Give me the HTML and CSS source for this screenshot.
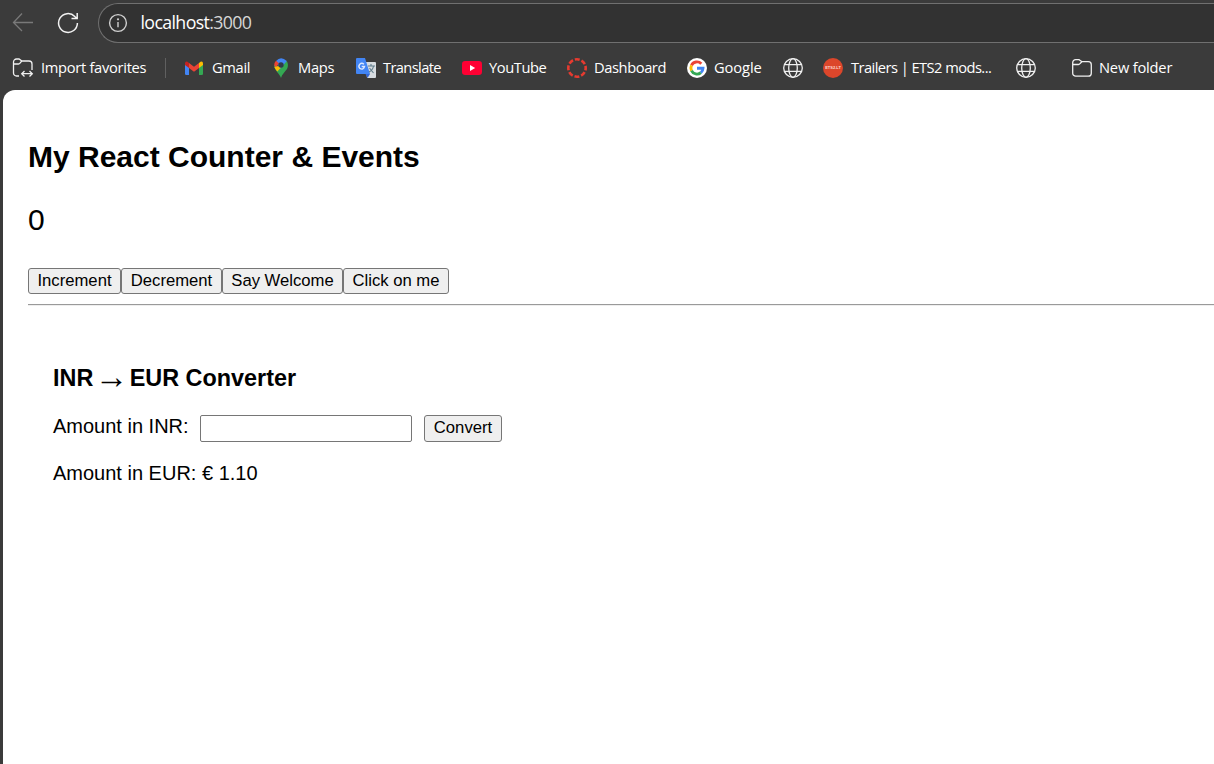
FILE: index.html
```html
<!DOCTYPE html>
<html lang="en">
<head>
<meta charset="utf-8">
<title>React App</title>
<link rel="stylesheet" href="styles.css">
</head>
<body>
<header class="toolbar">
  <svg class="back" width="22" height="20" viewBox="0 0 22 20"><path d="M21 9.5H2M10 .5L1.5 9.5L10 18"/></svg>
  <svg class="reload" width="22" height="22" viewBox="0 0 22 22"><path d="M20.4 11A9.4 9.4 0 1 1 17.8 4.5L20 6.5M20.2 1V6.5H14.5"/></svg>
  <div class="address">
    <svg class="info" width="20" height="20" viewBox="0 0 20 20"><circle cx="10" cy="10" r="8.4"/><path d="M10 9V14.2"/><circle class="dot" cx="10" cy="6.3" r="1.1"/></svg>
    <span class="url">localhost<span class="port">:3000</span></span>
  </div>
</header>
<nav class="bookmarks">
  <div class="item"><svg class="line" width="22" height="20" viewBox="0 0 22 20"><path d="M7 18H4.5A3 3 0 0 1 1.5 15V4A3 3 0 0 1 4.5 1H7L10 3H17A3 3 0 0 1 20 6V12M1.5 6H6.5C8 6 8 4.5 10 3M10 15.7H20M12.5 13L9.7 15.7L12.5 18.5M17.5 13L20.3 15.7L17.5 18.5"/></svg><span class="label import">Import favorites</span></div>
  <div class="separator"></div>
  <div class="item"><svg width="20" height="20" viewBox="0 0 20 20"><path fill="#4285f4" d="M1 5L5 8V17H2.3Q1 17 1 15.7Z"/><path fill="#34a853" d="M15 8L19 5V15.7Q19 17 17.7 17H15Z"/><path fill="#fbbc04" d="M15 5L16.5 3.7Q19 2.8 19 5.5V7L15 10Z"/><path fill="#c5221f" d="M5 10L1 7V5.5Q1 2.8 3.5 3.7L5 5Z"/><path fill="#ea4335" d="M5 5L10 8.8L15 5V10L10 13.8L5 10Z"/></svg><span class="label gmail">Gmail</span></div>
  <div class="item"><svg width="20" height="20" viewBox="0 0 20 20"><path fill="#34a853" d="M10 20C9 16 3 12 3 7L7 8L15.8 3Q18 7 16 11C14 14 11 16 10 20Z"/><path fill="#4285f4" d="M5 3Q10-2.5 15.8 3L9 11L5 3Z"/><path fill="#ea4335" d="M5 2.7L8 5.3L4.6 10Q1.7 6 5 2.7Z"/><path fill="#fbbc04" d="M3.4 9L7.8 8L10 9.5L6.3 13.6Q4 11 3.4 9Z"/><circle cx="10" cy="7" r="2.7" fill="#303b4a"/></svg><span class="label maps">Maps</span></div>
  <div class="item"><svg width="20" height="20" viewBox="0 0 20 20"><path fill="#d7dce0" d="M9 4H19Q20 4 20 5V19Q20 20 19 20H11Z"/><path fill="#4285f4" d="M1 0H9L14 16H1Q0 16 0 15V1Q0 0 1 0Z"/><path fill="#3367d6" d="M9.5 16H14L11.5 20Z"/><path fill="none" stroke="#607d8b" stroke-width="1.1" d="M12 8H19M15 6V8M17.5 8Q17 12 13 14M13.5 10L17.5 15"/><path fill="none" stroke="#dce8ff" stroke-width="1.4" d="M8 6.3Q5.7 4.4 3.8 6.2T3.8 10.4Q7.4 12.4 8.5 8.5H5.7"/></svg><span class="label translate">Translate</span></div>
  <div class="item"><svg width="20" height="20" viewBox="0 0 20 20"><rect y="3" width="20" height="14" rx="3.2" fill="#ff0033"/><path fill="#fff" d="M8 7L13.2 10L8 13Z"/></svg><span class="label youtube">YouTube</span></div>
  <div class="item"><svg width="20" height="20" viewBox="0 0 20 20"><circle cx="10" cy="10" r="8.7" fill="none" stroke="#e63b30" stroke-width="2.6" stroke-dasharray="4.9 1.93" stroke-dashoffset="2.45"/></svg><span class="label dashboard">Dashboard</span></div>
  <div class="item"><svg width="20" height="20" viewBox="0 0 20 20"><circle cx="10" cy="10" r="10" fill="#fff"/><g fill="none" stroke-width="2.9"><path stroke="#ea4335" d="M4.5 7.4A6 6 0 0 1 14.3 5.8"/><path stroke="#fbbc05" d="M4.5 12.6A6 6 0 0 1 4.5 7.4"/><path stroke="#34a853" d="M13.9 14.6A6 6 0 0 1 4.5 12.6"/><path stroke="#4285f4" d="M10 10.2H16Q15.9 13 13.9 14.6"/></g></svg><span class="label google">Google</span></div>
  <div class="item"><svg class="line globe" width="20" height="20" viewBox="0 0 20 20"><circle cx="10" cy="10" r="9.3"/><ellipse cx="10" cy="10" rx="4.3" ry="9.3"/><path d="M1.5 6.7H18.5M1.5 13.3H18.5"/></svg></div>
  <div class="item"><span class="badge">ETS2.LT</span><span class="label trailers">Trailers | ETS2 mods...</span></div>
  <div class="item"><svg class="line globe" width="20" height="20" viewBox="0 0 20 20"><circle cx="10" cy="10" r="9.3"/><ellipse cx="10" cy="10" rx="4.3" ry="9.3"/><path d="M1.5 6.7H18.5M1.5 13.3H18.5"/></svg></div>
  <div class="item"><svg class="line" width="20" height="20" viewBox="0 0 20 20"><path d="M3.7 1.7H7L10 3.7H16.3A3 3 0 0 1 19.3 6.7V15.2A3 3 0 0 1 16.3 18.2H3.7A3 3 0 0 1 .7 15.2V4.7A3 3 0 0 1 3.7 1.7ZM.7 6.5H6.5C8 6.5 8 5 10 3.7"/></svg><span class="label folder">New folder</span></div>
</nav>
<main class="page">
  <h2 class="title">My React Counter &amp; Events</h2>
  <p class="count">0</p>
  <div class="actions"><button class="button increment">Increment</button><button class="button decrement">Decrement</button><button class="button welcome">Say Welcome</button><button class="button click">Click on me</button></div>
  <hr class="rule">
  <section class="converter">
    <h3 class="subtitle"><span>INR</span> <span class="arrow">→</span> <span>EUR Converter</span></h3>
    <div class="row"><label class="caption" for="inr">Amount in INR:</label><input class="field" id="inr" type="text"><button class="button convert">Convert</button></div>
    <p class="result">Amount in EUR: € 1.10</p>
  </section>
</main>
</body>
</html>
```
FILE: styles.css
```css
* { box-sizing: border-box; }
body {
  margin: 0;
  height: 764px;
  overflow: hidden;
  background: #3b3b3b;
  font-family: "Liberation Sans", Arial, sans-serif;
  color: #000;
}
svg { display: block; flex: none; }
.toolbar { display: flex; align-items: center; height: 46px; padding-left: 12px; }
.back { fill: none; stroke: #797979; stroke-width: 1.3; }
.reload { margin-left: 23px; fill: none; stroke: #f2f2f2; stroke-width: 1.5; }
.address {
  display: flex;
  align-items: center;
  flex: 1;
  height: 40px;
  margin-left: 19px;
  padding-left: 9px;
  background: #323232;
  border: 1px solid #707070;
  border-right: 0;
  border-radius: 20px 0 0 20px;
}
.info { fill: none; stroke: #d0d0d0; stroke-width: 1.4; }
.info .dot { fill: #d0d0d0; stroke: none; }
.url {
  margin-left: 12.5px;
  padding-bottom: 2px;
  font: 17.8px/24px "Open Sans", sans-serif;
  letter-spacing: -.64px;
  color: #fff;
}
.port { color: #d6d6d6; }
.bookmarks {
  display: grid;
  grid-template-columns: 153px 19px 87px 85px 106px 105px 120px 96px 40px 193px 56px 1fr;
  align-items: center;
  height: 44px;
  padding-left: 12px;
}
.item { display: flex; align-items: center; }
.separator { width: 1px; height: 20px; background: #606060; }
.line { fill: none; stroke: #f0f0f0; stroke-width: 1.3; }
.label {
  margin-left: 7px;
  padding-bottom: 2px;
  font: 14.7px/20px "Open Sans", sans-serif;
  color: #fff;
  white-space: nowrap;
}
.import { letter-spacing: -.3px; }
.gmail { margin-left: 8px; letter-spacing: -.35px; }
.maps { letter-spacing: -.25px; }
.translate { letter-spacing: -.63px; }
.youtube { letter-spacing: -.42px; }
.dashboard { letter-spacing: -.42px; }
.google { letter-spacing: -.1px; }
.trailers { margin-left: 8px; letter-spacing: -.56px; }
.folder { letter-spacing: -.2px; }
.badge {
  display: flex;
  align-items: center;
  justify-content: center;
  width: 20px;
  height: 20px;
  border-radius: 50%;
  background: #dc462b;
  color: #ffd9d0;
  font: bold 4px/1 "Liberation Sans", sans-serif;
}
.page {
  height: 674px;
  margin-left: 3px;
  padding: 47px 0 0 25px;
  background: #fff;
  border-radius: 12px 0 0 0;
}
.title { margin: 0; font-size: 30px; line-height: 40px; }
.count { margin: 23px 0 28px; font-size: 30px; line-height: 40px; }
.actions { display: flex; }
.button {
  height: 26px;
  padding: 0;
  border: 1px solid #767676;
  border-radius: 3px;
  background: #efefef;
  color: #000;
  font: 16.67px/22px "Liberation Sans", Arial, sans-serif;
}
.increment { width: 93px; }
.decrement { width: 101px; }
.welcome { width: 121px; }
.click { width: 106px; }
.rule { height: 2px; margin: 10px 0 0; border: 0; border-top: 1px solid #9a9a9a; border-bottom: 1px solid #eee; }
.converter { padding: 57px 0 0 25px; }
.subtitle {
  display: flex;
  gap: 1.5px;
  height: 30px;
  margin: 0;
  font-size: 23.4px;
  line-height: 30px;
}
.arrow {
  font-family: "Liberation Serif", serif;
  font-size: 33.4px;
  font-weight: 400;
  line-height: 27px;
}
.row { display: flex; align-items: flex-start; margin-top: 22px; }
.caption { width: 147px; font-size: 20px; line-height: 23px; }
.field { width: 212px; height: 27px; border: 1px solid #767676; border-radius: 2px; background: #fff; }
.convert { width: 78px; height: 27px; margin-left: 12px; padding-bottom: 2px; }
.result { margin: 19px 0 0; font-size: 20px; line-height: 24px; }
```
